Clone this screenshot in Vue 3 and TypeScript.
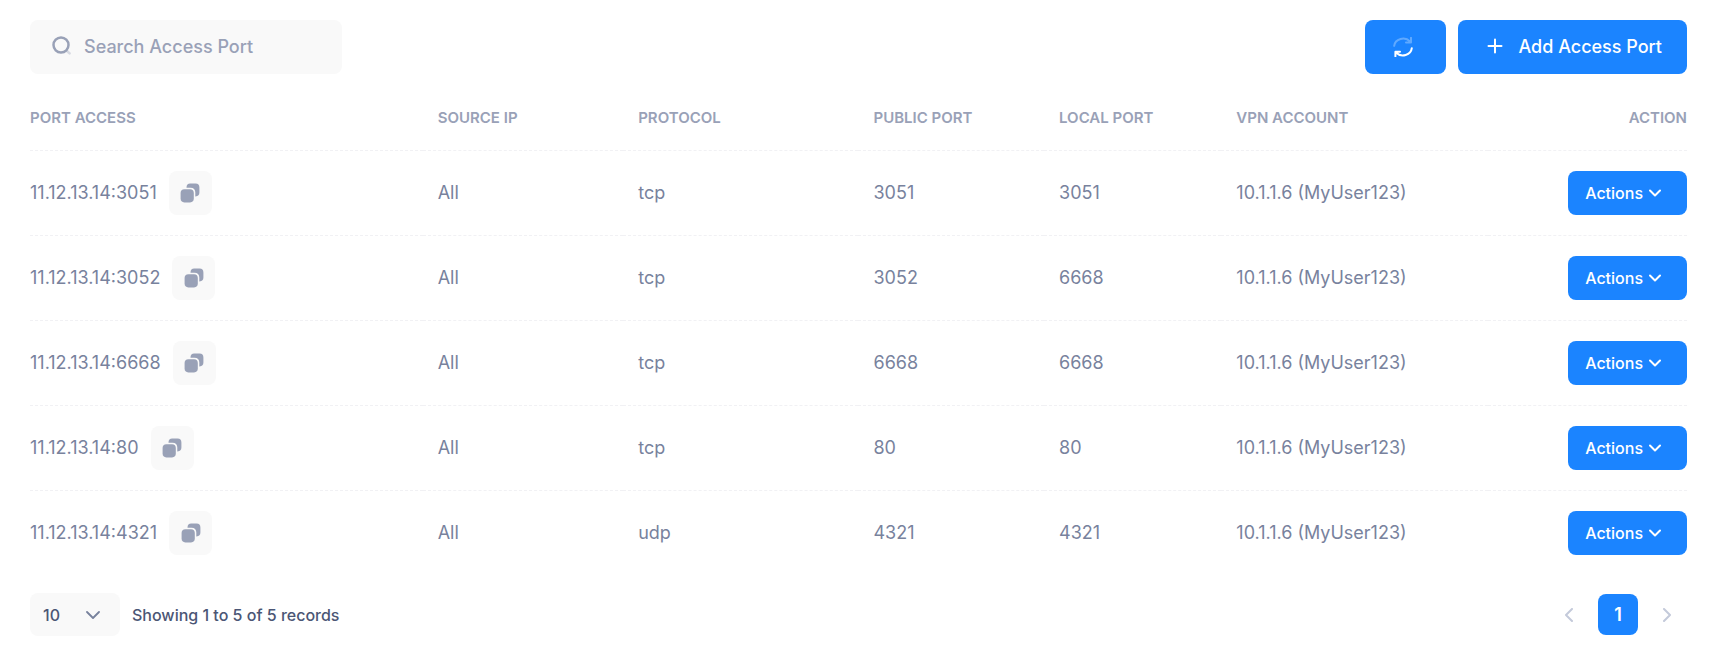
<script setup lang="ts">
import { computed, ref } from 'vue'

interface AccessPort {
  access: string
  source: string
  protocol: string
  publicPort: number
  localPort: number
  account: string
}

const query = ref('')
const pageSize = ref(10)

const ports: AccessPort[] = [
  { access: '11.12.13.14:3051', source: 'All', protocol: 'tcp', publicPort: 3051, localPort: 3051, account: '10.1.1.6 (MyUser123)' },
  { access: '11.12.13.14:3052', source: 'All', protocol: 'tcp', publicPort: 3052, localPort: 6668, account: '10.1.1.6 (MyUser123)' },
  { access: '11.12.13.14:6668', source: 'All', protocol: 'tcp', publicPort: 6668, localPort: 6668, account: '10.1.1.6 (MyUser123)' },
  { access: '11.12.13.14:80', source: 'All', protocol: 'tcp', publicPort: 80, localPort: 80, account: '10.1.1.6 (MyUser123)' },
  { access: '11.12.13.14:4321', source: 'All', protocol: 'udp', publicPort: 4321, localPort: 4321, account: '10.1.1.6 (MyUser123)' },
]

const rows = computed(() => {
  const text = query.value.trim().toLowerCase()
  return ports.filter((port) => Object.values(port).join(' ').toLowerCase().includes(text))
})
</script>

<template>
  <main class="page">
    <header class="toolbar">
      <label class="search">
        <svg class="search-icon" viewBox="0 0 20 20" aria-hidden="true">
          <circle cx="9" cy="9" r="7.5" fill="none" stroke="#99a1b7" stroke-width="2.5" />
          <path d="M15 15 L17.6 17.4" fill="none" stroke="#99a1b7" stroke-opacity="0.35" stroke-width="2.6" stroke-linecap="round" />
        </svg>
        <input v-model="query" type="text" placeholder="Search Access Port" aria-label="Search Access Port" />
      </label>
      <div class="tools">
        <button class="btn refresh" type="button" aria-label="Refresh">
          <svg class="refresh-icon" viewBox="0 0 20 20" aria-hidden="true">
            <g fill="none" stroke="#fff" stroke-width="2" stroke-linecap="round" stroke-linejoin="round">
              <path stroke-opacity="0.3" d="M1.2 8.8 A9 8 0 0 1 17 4.4 M18 0.8 V5.4 H13" />
              <path d="M18.8 11.2 A9 8 0 0 1 3.2 15.8 M2.4 19.4 V14.8 H7" />
            </g>
          </svg>
        </button>
        <button class="btn add" type="button">
          <svg class="plus-icon" viewBox="0 0 16 16" aria-hidden="true">
            <path d="M8 1.5 V14.5 M1.5 8 H14.5" stroke="#fff" stroke-width="2" stroke-linecap="round" />
          </svg>
          Add Access Port
        </button>
      </div>
    </header>

    <table class="ports">
      <colgroup>
        <col class="col-access" />
        <col class="col-source" />
        <col class="col-protocol" />
        <col class="col-public" />
        <col class="col-local" />
        <col />
        <col class="col-action" />
      </colgroup>
      <thead>
        <tr>
          <th scope="col">Port Access</th>
          <th scope="col">Source IP</th>
          <th scope="col">Protocol</th>
          <th scope="col">Public Port</th>
          <th scope="col">Local Port</th>
          <th scope="col">VPN Account</th>
          <th scope="col" class="end">Action</th>
        </tr>
      </thead>
      <tbody>
        <tr v-for="port in rows" :key="port.access">
          <td>
            <div class="access">
              <span>{{ port.access }}</span>
              <button class="copy" type="button" :aria-label="`Copy ${port.access}`">
                <svg class="copy-icon" viewBox="0 0 20 20" aria-hidden="true">
                  <path d="M10.2 0.6 H15.6 Q19.4 0.6 19.4 4.4 V9.6 Q19.4 13.4 15.6 13.4 H15.3 V9.6 Q15.3 4.7 10.4 4.7 H6.5 V4.4 Q6.5 0.6 10.2 0.6 Z" />
                  <rect x="0.6" y="6.2" width="13.2" height="13.2" rx="3.8" />
                </svg>
              </button>
            </div>
          </td>
          <td>{{ port.source }}</td>
          <td>{{ port.protocol }}</td>
          <td>{{ port.publicPort }}</td>
          <td>{{ port.localPort }}</td>
          <td>{{ port.account }}</td>
          <td class="end">
            <button class="btn actions" type="button" aria-haspopup="menu">
              Actions
              <svg class="caret" viewBox="0 0 12 12" aria-hidden="true">
                <path d="M1 3.5 L6 8.5 L11 3.5" fill="none" stroke="#fff" stroke-width="2" stroke-linecap="round" stroke-linejoin="round" />
              </svg>
            </button>
          </td>
        </tr>
      </tbody>
    </table>

    <footer class="footer">
      <div class="length">
        <span class="select">
          <select v-model="pageSize" aria-label="Records per page">
            <option :value="10">10</option>
            <option :value="25">25</option>
            <option :value="50">50</option>
          </select>
          <svg class="select-caret" viewBox="0 0 14 14" aria-hidden="true">
            <path d="M1 4 L7 10 L13 4" fill="none" stroke="#78829d" stroke-width="1.8" stroke-linecap="round" stroke-linejoin="round" />
          </svg>
        </span>
        <span>Showing 1 to {{ rows.length }} of {{ rows.length }} records</span>
      </div>
      <nav class="pager" aria-label="Pagination">
        <button type="button" aria-label="Previous page" disabled>
          <svg class="arrow" viewBox="0 0 14 14" aria-hidden="true">
            <path d="M10 1 L4 7 L10 13" />
          </svg>
        </button>
        <button type="button" class="current" aria-current="page">1</button>
        <button type="button" aria-label="Next page" disabled>
          <svg class="arrow" viewBox="0 0 14 14" aria-hidden="true">
            <path d="M4 1 L10 7 L4 13" />
          </svg>
        </button>
      </nav>
    </footer>
  </main>
</template>

<style>
body {
  background: #fff;
}
</style>

<style scoped>
.page {
  padding: 20px 28px 16px 30px;
  font-family: Inter, 'Liberation Sans', sans-serif;
  font-size: 18px;
  font-weight: 500;
  color: #78829d;
}

button,
input,
select {
  margin: 0;
  padding: 0;
  border: 0;
  background: none;
  font: inherit;
  color: inherit;
}

button,
select {
  cursor: pointer;
}

svg {
  display: block;
  flex: none;
}

.toolbar,
.footer,
.tools,
.length,
.pager,
.access {
  display: flex;
  align-items: center;
}

.toolbar,
.footer {
  justify-content: space-between;
}

.tools {
  gap: 12px;
}

.search {
  display: flex;
  align-items: center;
  gap: 12px;
  box-sizing: border-box;
  width: 312px;
  height: 54px;
  padding: 0 20px 2px 22px;
  border-radius: 8px;
  background: #f9f9f9;
}

.search-icon {
  width: 20px;
  height: 20px;
}

.search input {
  flex: 1;
  min-width: 0;
  outline: none;
}

.search input::placeholder {
  color: #99a1b7;
  opacity: 1;
}

.btn {
  display: inline-flex;
  align-items: center;
  justify-content: center;
  border-radius: 8px;
  background: #1b84ff;
  color: #fff;
  white-space: nowrap;
}

.refresh {
  width: 81px;
  height: 54px;
  padding-right: 5px;
}

.refresh-icon {
  width: 20px;
  height: 20px;
}

.add {
  gap: 15px;
  height: 54px;
  padding: 0 25px 2px 29px;
}

.plus-icon {
  width: 16px;
  height: 16px;
}

.ports {
  width: 100%;
  border-collapse: collapse;
  table-layout: fixed;
}

.col-access {
  width: 23.7%;
}

.col-source {
  width: 12.1%;
}

.col-protocol {
  width: 14.2%;
}

.col-public {
  width: 11.2%;
}

.col-local {
  width: 10.7%;
}

.col-action {
  width: 12%;
}

th,
td {
  box-sizing: border-box;
  height: 85px;
  padding: 0 15px;
  text-align: left;
  border-bottom: 1px dashed #f1f1f4;
}

td {
  font-weight: 400;
}

th {
  height: 76px;
  padding-bottom: 8px;
  padding-top: 20px;
  font-size: 15px;
  font-weight: 600;
  text-transform: uppercase;
  color: #99a1b7;
}

th:first-child,
td:first-child {
  padding-left: 0;
}

th:last-child,
td:last-child {
  padding-right: 0;
}

tbody tr:last-child td {
  border-bottom: 0;
}

.end {
  text-align: right;
}

.access {
  gap: 12px;
}

.copy {
  display: flex;
  align-items: center;
  justify-content: center;
  width: 43px;
  height: 44px;
  border-radius: 8px;
  background: #f9f9f9;
}

.copy-icon {
  width: 20px;
  height: 20px;
  fill: #99a1b7;
}

.actions {
  gap: 6px;
  height: 44px;
  padding: 0 26px 0 17px;
  font-size: 16px;
  font-weight: 500;
  vertical-align: middle;
}

.caret {
  width: 12px;
  height: 12px;
}

.footer {
  margin-top: 18px;
  font-size: 16px;
  color: #4b5675;
}

.length {
  gap: 12px;
}

.select {
  display: grid;
  align-items: center;
  width: 90px;
  height: 43px;
  border-radius: 8px;
  background: #f9f9f9;
}

.select select {
  grid-area: 1 / 1;
  height: 100%;
  padding: 0 13px;
  border-radius: 8px;
  font-size: 16px;
  appearance: none;
}

.select-caret {
  grid-area: 1 / 1;
  justify-self: end;
  width: 14px;
  height: 14px;
  margin-right: 20px;
  pointer-events: none;
}

.pager {
  gap: 9px;
}

.pager button {
  display: flex;
  align-items: center;
  justify-content: center;
  width: 40px;
  height: 41px;
  border-radius: 8px;
}

.pager .current {
  background: #1b84ff;
  color: #fff;
  font-size: 18px;
  font-weight: 600;
}

.arrow {
  width: 14px;
  height: 14px;
  fill: none;
  stroke: #c4cada;
  stroke-width: 2;
  stroke-linecap: round;
  stroke-linejoin: round;
}
</style>
